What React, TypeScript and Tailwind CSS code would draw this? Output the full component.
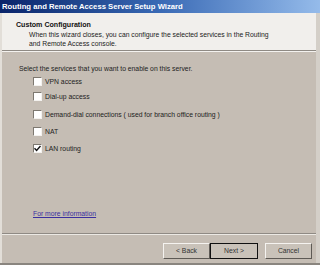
import { useState } from 'react';

const services = [
  { label: 'VPN access', checked: false, mt: 'mt-[4px]' },
  { label: 'Dial-up access', checked: false, mt: 'mt-[6px]' },
  { label: 'Demand-dial connections ( used for branch office routing )', checked: false, mt: 'mt-[9px]' },
  { label: 'NAT', checked: false, mt: 'mt-[8px]' },
  { label: 'LAN routing', checked: true, mt: 'mt-[8px]' },
];

const Checkbox = ({ checked, onClick }: { checked: boolean; onClick: () => void }) => (
  <span
    onClick={onClick}
    className="w-[9px] h-[9px] bg-white border border-t-[#7d7870] border-l-[#7d7870] border-r-[#f4f2ef] border-b-[#f4f2ef] flex items-center justify-center shrink-0"
  >
    {checked && (
      <svg width="7" height="7" viewBox="0 0 7 7">
        <path d="M0.5 3.2 L2.6 5.4 L6.5 1" stroke="#111" strokeWidth="1.4" fill="none" />
      </svg>
    )}
  </span>
);

const WizButton = ({ label, isDefault }: { label: string; isDefault?: boolean }) => (
  <button
    className={`${isDefault ? 'w-[48px]' : 'w-[47px]'} h-[16px] text-[6.8px] text-[#333] bg-[#c9c2b9] border ${
      isDefault ? 'border-[#111]' : 'border-t-[#f5f3f0] border-l-[#f5f3f0] border-r-[#5e5a55] border-b-[#5e5a55]'
    } flex items-center justify-center`}
  >
    {label}
  </button>
);

const App = () => {
  const [checked, setChecked] = useState(services.map(s => s.checked));

  return (
    <div
      className="w-[320px] h-[265px] bg-[#c5bdb4] flex flex-col overflow-hidden"
      style={{ fontFamily: '"Liberation Sans", Arial, sans-serif' }}
    >
      {/* title bar */}
      <div className="h-[13px] bg-gradient-to-r from-[#0a246a] via-[#3a6ab5] to-[#95bbea] flex items-center pl-[2px] pr-[4px]">
        <span className="text-white font-bold text-[7.7px] leading-none">Routing and Remote Access Server Setup Wizard</span>
      </div>

      <div className="flex-1 flex flex-col border-r-[4px] border-r-[#d4cfc8] border-l-[2px] border-l-[#e2ded8]">
        {/* header */}
        <div className="h-[38px] bg-[#f1efec] pl-[14px] pt-[8px] border-b border-b-[#8f8a84]">
          <div className="text-[7.1px] font-bold text-[#111] leading-[9px]">Custom Configuration</div>
          <div className="pl-[13px] text-[6.8px] text-[#222] leading-[9px]">
            When this wizard closes, you can configure the selected services in the Routing
            <br />
            and Remote Access console.
          </div>
        </div>
        <div className="h-px bg-[#f4f2ef]" />

        {/* body */}
        <div className="flex-1 flex flex-col pl-[17px] pt-[12px]">
          <div className="text-[6.8px] text-[#222] leading-[9px]">Select the services that you want to enable on this server.</div>
          <div className="pl-[14px] flex flex-col">
            {services.map((s, i) => (
              <label key={s.label} className={`flex items-center gap-[3px] ${s.mt}`}>
                <Checkbox
                  checked={checked[i]}
                  onClick={() => setChecked(c => c.map((v, j) => (j === i ? !v : v)))}
                />
                <span className="text-[6.8px] text-[#222] leading-[9px]">{s.label}</span>
              </label>
            ))}
          </div>
          <a href="#" className="mt-auto mb-[15px] ml-[14px] text-[6.8px] text-[#3a2fa0] underline leading-[9px] w-fit">
            For more information
          </a>
        </div>

        {/* footer */}
        <div className="border-t border-t-[#8f8a84]">
          <div className="h-px bg-[#ece9e4]" />
          <div className="h-[28px] flex items-start justify-end pr-[4px] pt-[8px]">
            <WizButton label="< Back" />
            <WizButton label="Next >" isDefault />
            <div className="w-[7px]" />
            <WizButton label="Cancel" />
          </div>
        </div>
      </div>
      <div className="h-[2px] bg-[#8a857f]" />
    </div>
  );
};

export default App;
